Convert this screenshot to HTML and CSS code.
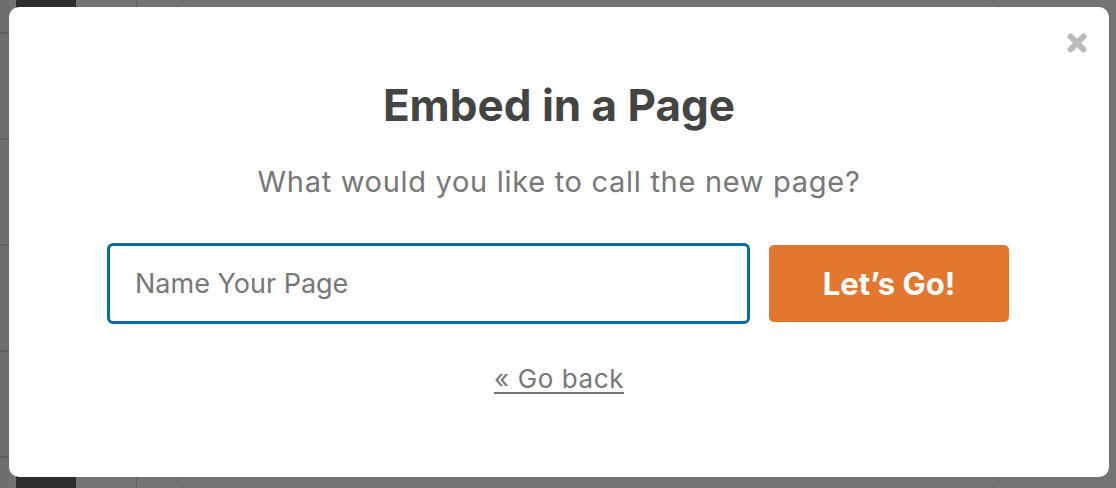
FILE: index.html
```html
<!DOCTYPE html>
<html lang="en">
<head>
<meta charset="utf-8">
<title>Embed in a Page</title>
<link rel="stylesheet" href="styles.css">
</head>
<body>
<div class="page">
  <div class="edge">
    <div class="edge-row"></div>
    <div class="edge-row"></div>
    <div class="edge-row"></div>
    <div class="edge-row"></div>
    <div class="edge-row"></div>
  </div>
  <div class="spacer"></div>
  <div class="dark-col"></div>
  <div class="mid-col"></div>
  <div class="thin-col"></div>
  <div class="card-col"><div class="card"></div></div>
  <div class="rest-col"></div>
</div>

<div class="modal" role="dialog" aria-labelledby="modal-title">
  <button class="close" aria-label="Close">
    <svg width="22" height="22" viewBox="0 0 22 22" aria-hidden="true">
      <path d="M4.5 4.5 L17.5 17.5 M17.5 4.5 L4.5 17.5" stroke="#bbbbbb" stroke-width="6" stroke-linecap="round"/>
    </svg>
  </button>
  <h1 id="modal-title" class="title">Embed in a Page</h1>
  <p class="subtitle">What would you like to call the new page?</p>
  <div class="form-row">
    <input class="name-input" type="text" placeholder="Name Your Page">
    <button class="go-btn">Let’s Go!</button>
  </div>
  <a class="back-link" href="#">« Go back</a>
</div>
</body>
</html>
```

FILE: styles.css
```css
html, body {
  margin: 0;
  padding: 0;
  height: 100%;
}

body {
  background: #737373;
  font-family: Inter, "Noto Sans", "Liberation Sans", sans-serif;
  overflow: hidden;
}

.page {
  display: flex;
  height: 488px;
}

.edge {
  width: 9px;
  background: #6b6e71;
  display: flex;
  flex-direction: column;
  padding-top: 32px;
  gap: 104px;
}

.edge-row {
  height: 2px;
  background: #5e6063;
}

.spacer {
  width: 7px;
  background: #727272;
}

.dark-col {
  width: 60px;
  background: #2d2d2d;
}

.mid-col {
  width: 60px;
  background: #737373;
}

.thin-col {
  width: 40px;
  border-left: 1px solid #616161;
  background: #737373;
}

.card-col {
  width: 822px;
}

.card {
  height: 100%;
  border: 1px solid #656565;
  border-radius: 10px;
  margin-top: -1px;
}

.rest-col {
  flex: 1;
}

.modal {
  position: fixed;
  top: 7px;
  left: 9px;
  right: 7px;
  bottom: 11px;
  background: #ffffff;
  border-radius: 10px;
  display: flex;
  flex-direction: column;
  align-items: center;
  box-sizing: border-box;
  padding-top: 70px;
}

.close {
  position: absolute;
  top: 25px;
  right: 21px;
  width: 22px;
  height: 22px;
  padding: 0;
  border: 0;
  background: none;
  cursor: pointer;
}

.close svg {
  display: block;
}

.title {
  margin: 0;
  font-size: 44px;
  font-weight: 700;
  color: #444444;
  line-height: 56px;
}

.subtitle {
  margin: 31px 0 0;
  font-size: 29px;
  line-height: 36px;
  letter-spacing: 0.7px;
  color: #777777;
}

.form-row {
  display: flex;
  gap: 19px;
  margin-top: 43px;
  margin-right: 2px;
  width: 902px;
}

.name-input {
  width: 643px;
  height: 81px;
  box-sizing: border-box;
  border: 3px solid #056aab;
  border-radius: 6px;
  padding: 0 25px;
  font-family: inherit;
  font-size: 27px;
  color: #444;
  outline: none;
}

.name-input::placeholder {
  color: #777777;
}

.go-btn {
  width: 240px;
  height: 77px;
  margin-top: 2px;
  border: 0;
  border-radius: 5px;
  background: #e27730;
  color: #ffffff;
  font-family: inherit;
  font-size: 31px;
  font-weight: 700;
  cursor: pointer;
}

.back-link {
  margin-top: 39px;
  font-size: 26px;
  line-height: 32px;
  letter-spacing: 0.6px;
  color: #777777;
  text-decoration: underline;
  text-underline-offset: 4px;
}
```
